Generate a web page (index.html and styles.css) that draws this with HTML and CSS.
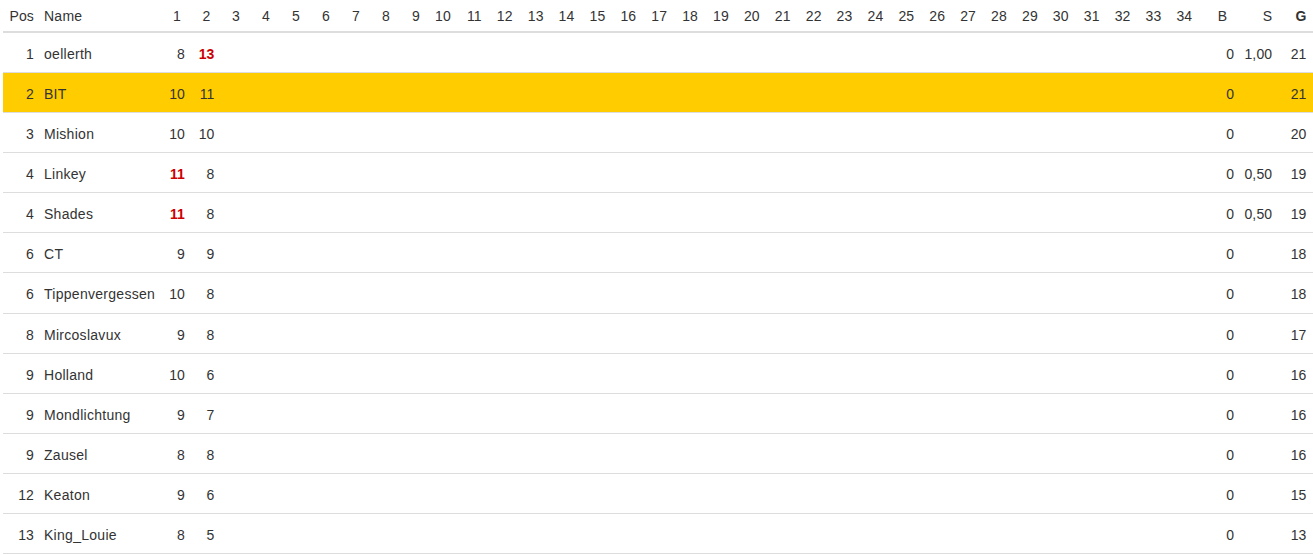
FILE: index.html
```html
<!DOCTYPE html>
<html lang="de">
<head>
<meta charset="utf-8">
<title>Tabelle</title>
<link rel="stylesheet" href="styles.css">
</head>
<body>
<div class="wrap">
<table class="standings">
  <colgroup>
    <col class="c-pos"><col class="c-name">
    <col class="c-r1"><col class="c-r2"><col class="c-r2">
    <col class="c-s"><col class="c-s"><col class="c-s"><col class="c-s"><col class="c-s"><col class="c-s">
    <col class="c-d"><col class="c-d"><col class="c-d"><col class="c-d"><col class="c-d">
    <col class="c-d"><col class="c-d"><col class="c-d"><col class="c-d"><col class="c-d">
    <col class="c-d"><col class="c-d"><col class="c-d"><col class="c-d"><col class="c-d">
    <col class="c-d"><col class="c-d"><col class="c-d"><col class="c-d"><col class="c-d">
    <col class="c-d"><col class="c-d"><col class="c-d"><col class="c-d"><col class="c-d">
    <col class="c-b"><col class="c-sum"><col class="c-g">
  </colgroup>
  <thead>
    <tr>
      <th class="h-pos">Pos</th><th class="h-name">Name</th>
      <th>1</th><th>2</th><th>3</th><th>4</th><th>5</th><th>6</th><th>7</th><th>8</th><th>9</th>
      <th>10</th><th>11</th><th>12</th><th>13</th><th>14</th><th>15</th><th>16</th><th>17</th><th>18</th><th>19</th>
      <th>20</th><th>21</th><th>22</th><th>23</th><th>24</th><th>25</th><th>26</th><th>27</th><th>28</th><th>29</th>
      <th>30</th><th>31</th><th>32</th><th>33</th><th>34</th>
      <th class="h-b">B</th><th class="h-s">S</th><th class="h-g">G</th>
    </tr>
  </thead>
  <tbody>
    <tr><td class="pos">1</td><td class="name">oellerth</td><td>8</td><td class="top">13</td><td colspan="32"></td><td>0</td><td>1,00</td><td class="g">21</td></tr>
    <tr class="me"><td class="pos">2</td><td class="name">BIT</td><td>10</td><td>11</td><td colspan="32"></td><td>0</td><td></td><td class="g">21</td></tr>
    <tr><td class="pos">3</td><td class="name">Mishion</td><td>10</td><td>10</td><td colspan="32"></td><td>0</td><td></td><td class="g">20</td></tr>
    <tr><td class="pos">4</td><td class="name">Linkey</td><td class="top">11</td><td>8</td><td colspan="32"></td><td>0</td><td>0,50</td><td class="g">19</td></tr>
    <tr><td class="pos">4</td><td class="name">Shades</td><td class="top">11</td><td>8</td><td colspan="32"></td><td>0</td><td>0,50</td><td class="g">19</td></tr>
    <tr><td class="pos">6</td><td class="name">CT</td><td>9</td><td>9</td><td colspan="32"></td><td>0</td><td></td><td class="g">18</td></tr>
    <tr><td class="pos">6</td><td class="name">Tippenvergessen</td><td>10</td><td>8</td><td colspan="32"></td><td>0</td><td></td><td class="g">18</td></tr>
    <tr><td class="pos">8</td><td class="name">Mircoslavux</td><td>9</td><td>8</td><td colspan="32"></td><td>0</td><td></td><td class="g">17</td></tr>
    <tr><td class="pos">9</td><td class="name">Holland</td><td>10</td><td>6</td><td colspan="32"></td><td>0</td><td></td><td class="g">16</td></tr>
    <tr><td class="pos">9</td><td class="name">Mondlichtung</td><td>9</td><td>7</td><td colspan="32"></td><td>0</td><td></td><td class="g">16</td></tr>
    <tr><td class="pos">9</td><td class="name">Zausel</td><td>8</td><td>8</td><td colspan="32"></td><td>0</td><td></td><td class="g">16</td></tr>
    <tr><td class="pos">12</td><td class="name">Keaton</td><td>9</td><td>6</td><td colspan="32"></td><td>0</td><td></td><td class="g">15</td></tr>
    <tr><td class="pos">13</td><td class="name">King_Louie</td><td>8</td><td>5</td><td colspan="32"></td><td>0</td><td></td><td class="g">13</td></tr>
  </tbody>
</table>
</div>
</body>
</html>
```

FILE: styles.css
```css
html, body {
  margin: 0;
  padding: 0;
  background: #fff;
}

body {
  font-family: "Liberation Sans", Arial, Helvetica, sans-serif;
  font-size: 14px;
  line-height: 20px;
  color: #333;
}

.wrap {
  padding-left: 3px;
}

.standings {
  width: 1310px;
  table-layout: fixed;
  border-collapse: separate;
  border-spacing: 0;
}

.c-pos { width: 36px; }
.c-name { width: 121px; }
.c-r1 { width: 30px; }
.c-r2 { width: 29.5px; }
.c-s { width: 30px; }
.c-d { width: 30.9px; }
.c-b { width: 38px; }
.c-sum { width: 38px; }
.c-g { width: 35.5px; }

.standings th {
  font-weight: normal;
  text-align: right;
  padding: 6px 9px 5px 0;
  border-bottom: 2px solid #ddd;
  white-space: nowrap;
  letter-spacing: 0.15px;
}

.standings th.h-pos { padding-right: 5px; }
.standings th.h-name { text-align: left; padding-left: 5px; padding-right: 0; letter-spacing: 0.25px; }
.standings th.h-b { padding-right: 12px; }
.standings th.h-s { padding-right: 5px; }
.standings th.h-g { padding-right: 6.5px; font-weight: bold; }

.standings td {
  text-align: right;
  padding: 11px 5px 8.08px 0;
  border-bottom: 1px solid #ddd;
  white-space: nowrap;
  overflow: hidden;
  letter-spacing: 0.15px;
}

.standings td.name {
  text-align: left;
  padding-left: 5px;
  letter-spacing: 0.28px;
}

.standings td.g { padding-right: 6.5px; }

.standings td.top {
  color: #cc0000;
  font-weight: bold;
}

.standings tr.me td {
  background: #ffcc00;
}
```
